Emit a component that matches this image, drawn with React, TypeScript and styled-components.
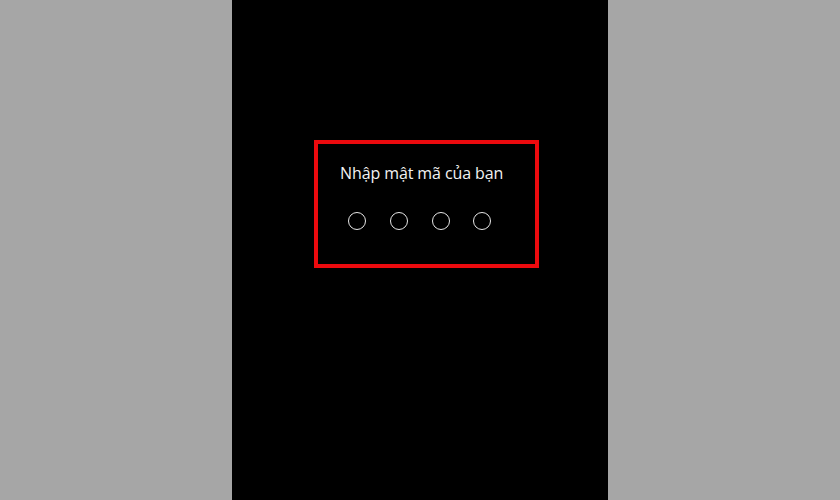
import React from "react";
import styled, { createGlobalStyle } from "styled-components";

const Global = createGlobalStyle`
  html, body { margin: 0; padding: 0; background: #a6a6a6; }
  body { font-family: "Liberation Sans", Arial, sans-serif; }
`;

const Page = styled.div`
  display: flex;
  width: 840px;
  height: 500px;
  background: #a6a6a6;
`;

const Side = styled.div<{ $w: number }>`
  width: ${(p) => p.$w}px;
  flex: none;
  background: #a6a6a6;
`;

const Screen = styled.div`
  width: 376px;
  flex: none;
  background: #000;
  display: flex;
  flex-direction: column;
  padding: 140px 0 0 82px;
  box-sizing: border-box;
`;

const Frame = styled.div`
  width: 225px;
  height: 128px;
  box-sizing: border-box;
  border: 4px solid #ec0a0e;
  display: flex;
  flex-direction: column;
  padding: 19px 0 0 22px;
`;

const Title = styled.div`
  color: #f2f2f2;
  font-family: "Open Sans", "Liberation Sans", sans-serif;
  font-size: 16px;
  line-height: 20px;
  letter-spacing: -0.1px;
`;

const Dots = styled.div`
  display: flex;
  gap: 23.8px;
  margin: 29px 0 0 8px;
`;

const Dot = styled.div`
  width: 18px;
  height: 18px;
  box-sizing: border-box;
  border-radius: 50%;
  border: 1.3px solid #e8e8e8;
`;

export default function App() {
  return (
    <>
      <Global />
      <Page>
        <Side $w={232} />
        <Screen>
          <Frame>
            <Title>Nhập mật mã của bạn</Title>
            <Dots>
              {[0, 1, 2, 3].map((i) => (
                <Dot key={i} />
              ))}
            </Dots>
          </Frame>
        </Screen>
        <Side $w={232} />
      </Page>
    </>
  );
}
